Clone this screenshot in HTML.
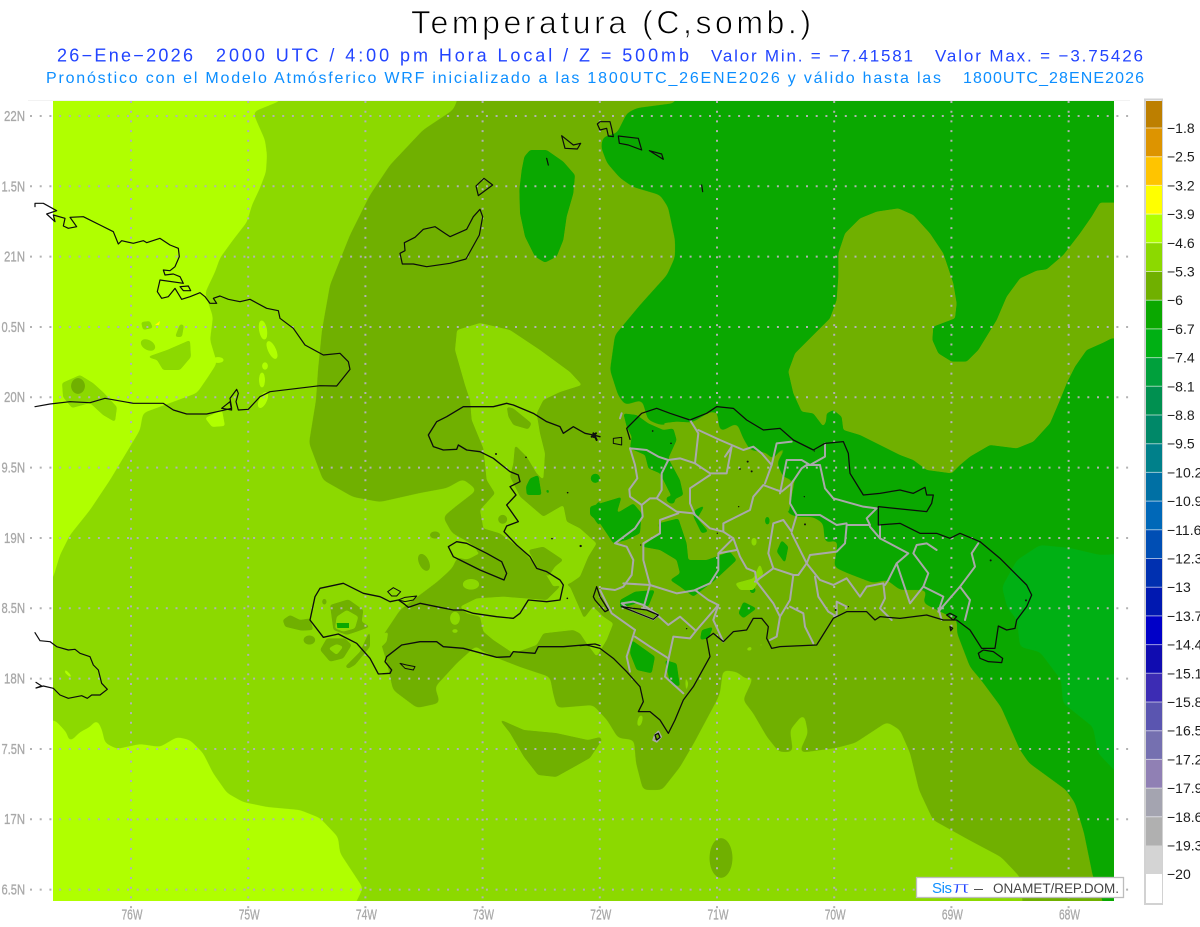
<!DOCTYPE html>
<html lang="es"><head><meta charset="utf-8"><title>Temperatura (C,somb.)</title>
<style>html,body{margin:0;padding:0;background:#fff;width:1200px;height:927px;overflow:hidden}svg{display:block}
text{font-family:"Liberation Sans",sans-serif}
.c{fill:none;stroke:#0c0c0c;stroke-linejoin:round;stroke-linecap:round}
.p{fill:none;stroke:#a9a9a9;stroke-width:6;stroke-linejoin:round;stroke-linecap:round}
.ax{fill:#a8a8a8;font-size:15px;stroke:#a8a8a8;stroke-width:.3}
.lg{fill:#1c1c1c;font-size:14px}
</style></head><body>
<svg width="1200" height="927" viewBox="0 0 1200 927" xmlns="http://www.w3.org/2000/svg">
<defs>
<clipPath id="map"><rect x="53" y="101" width="1061" height="800"/></clipPath>
<filter id="b" filterUnits="userSpaceOnUse" x="0" y="0" width="1200" height="927" color-interpolation-filters="sRGB"><feGaussianBlur stdDeviation="3"/><feComponentTransfer><feFuncA type="linear" slope="12" intercept="-5.5"/></feComponentTransfer></filter>
<filter id="f" filterUnits="userSpaceOnUse" x="0" y="0" width="1200" height="927" color-interpolation-filters="sRGB"><feGaussianBlur stdDeviation="1.3"/><feComponentTransfer><feFuncA type="linear" slope="8" intercept="-3.5"/></feComponentTransfer></filter>
</defs>
<rect width="1200" height="927" fill="#fff"/>
<line x1="28" y1="100.5" x2="1130" y2="100.5" stroke="#f2f2f2"/>
<text x="411" y="33.5" font-size="32" textLength="400" lengthAdjust="spacing" fill="#000" stroke="#fff" stroke-width=".8">Temperatura (C,somb.)</text>
<g font-size="18" fill="#2244ff">
<text x="57" y="61.5" textLength="136" lengthAdjust="spacing">26−Ene−2026</text>
<text x="216" y="61.5" textLength="473" lengthAdjust="spacing">2000 UTC / 4:00 pm Hora Local / Z = 500mb</text>
<text x="711" y="61.5" textLength="202" lengthAdjust="spacing" font-size="17">Valor Min. = −7.41581</text>
<text x="935" y="61.5" textLength="208" lengthAdjust="spacing" font-size="17">Valor Max. = −3.75426</text>
</g>
<g font-size="16" fill="#0c8eff">
<text x="46" y="83" textLength="895" lengthAdjust="spacing">Pronóstico con el Modelo Atmósferico WRF inicializado a las 1800UTC_26ENE2026 y válido hasta las</text>
<text x="963" y="83" textLength="181" lengthAdjust="spacing">1800UTC_28ENE2026</text>
</g>

<!-- map fills -->
<g clip-path="url(#map)">
<rect x="53" y="101" width="1061" height="800" fill="#8cd900"/>
<g filter="url(#b)" fill="#b0ff00">
<path d="M30 80L285 80 280 101 253 112 257 122 265 140 267 155 266 172 260 188 252 205 247 222 233 240 220 258 215 272 205 293 213 317 210 340 217 363 208 377 197 393 170 403 143 413 140 430 128 450 110 480 90 510 70 535 60 555 53 578 30 600Z"/>
<path d="M30 722L55 720 67 733 69 743 80 732 90 727 97 719 102 730 105 743 117 749 140 744 160 747 177 737 190 740 203 753 213 773 227 793 243 802 267 807 300 810 320 818 338 837 340 853 363 888 345 925 30 925Z"/>
</g>
<g filter="url(#f)" fill="#8cd900">
<path d="M141 322L150 321 153 328 143 330Z"/><ellipse cx="148" cy="345" rx="8" ry="5" transform="rotate(30 148 345)"/>
<path d="M147 357L167 350 190 340 191 357 180 370 163 370 157 360Z"/><path d="M175 337L180 324 184 325 182 337Z"/>
<path d="M62 383L80 375 93 383 103 392 117 407 115 422 103 415 90 403 72 408 63 397Z"/>
</g>
<ellipse cx="78" cy="386" rx="7" ry="8" fill="#70b000" filter="url(#f)"/>
<g filter="url(#f)" fill="#b0ff00"><ellipse cx="263" cy="330" rx="4" ry="10" transform="rotate(-10 263 330)"/><ellipse cx="272" cy="350" rx="4" ry="10" transform="rotate(-25 272 350)"/><ellipse cx="262" cy="380" rx="3" ry="8"/><ellipse cx="265" cy="366" rx="3" ry="4"/><ellipse cx="218" cy="360" rx="6" ry="3"/><ellipse cx="263" cy="400" rx="4" ry="9" transform="rotate(25 263 400)"/><path d="M205 418L222 410 225 426 212 427Z"/><path d="M64 668L71 675 72 679 65 673Z"/></g>
<path d="M155 325L160 321 159 325Z" fill="#ffff00"/>

<!-- mid main -->
<g filter="url(#b)" fill="#70b000">
<path d="M460 80L457 101 453 110 423 130 390 165 370 195 350 235 330 285 322 330 318 370 316 400 309 443 323 480 353 497 380 502 420 493 447 488 463 479 477 490 455 507 443 517 452 533 470 543 480 553 467 560 457 557 453 567 447 573 437 582 417 597 400 610 380 640 387 663 393 690 417 708 440 703 435 687 457 663 477 645 480 650 497 658 520 667 550 677 553 693 557 708 593 705 607 720 618 738 634 740 636 763 643 790 662 790 680 767 694 743 717 700 720 693 723 670 737 672 747 680 757 670 743 700 753 713 767 737 779 752 793 752 790 730 804 713 808 733 799 753 836 748 855 743 887 722 900 730 910 753 919 790 933 820 969 840 1001 857 1020 877 1025 925 1140 925 1140 80Z"/>
</g>
<g filter="url(#f)" fill="#70b000">
<path d="M499 719L524 730 556 733 588 740 600 737 602 740 590 758 574 767 556 777 538 775 524 757 510 733Z"/>
<ellipse cx="721" cy="858" rx="11.5" ry="20"/>
</g>
<!-- light patches in Haiti -->
<g filter="url(#f)" fill="#8cd900"><g transform="translate(280,400) scale(.33333)">
<path d="M531 -210L600 -231 690 -210 780 -150 870 -84 906 -45 840 -24 790 0 770 40 780 100 795 160 790 240 800 250 770 220 740 170 705 135 700 190 690 230 720 290 790 350 850 315 860 365 900 385 950 430 925 470 900 530 870 550 820 560 790 510 770 500 735 460 700 430 660 400 610 385 600 330 645 280 620 240 610 145 575 60 570 0 555 -45 525 -150Z"/>
<path d="M670 590L800 600 850 550 870 560 912 655 939 620 970 650 1000 670 980 720 950 770 920 730 900 700 880 690 790 700 770 735 700 760 640 720 610 695 600 650 560 640 540 620 590 595Z"/>
<path d="M505 440L530 425 570 440 600 460 560 478 530 470 515 460Z"/>
<ellipse cx="573" cy="553" rx="25" ry="16"/>
<ellipse cx="525" cy="655" rx="15" ry="20"/>
<ellipse cx="525" cy="693" rx="10" ry="6"/>
<path d="M300 705L325 695 320 725 300 745Z"/>
</g></g>
<g filter="url(#f)" fill="#70b000"><g transform="translate(280,400) scale(.33333)">
<path d="M680 20L700 25 755 70 745 88 700 75 685 50Z"/>
<path d="M745 450L790 440 850 480 825 500 805 530 770 500Z"/>
<ellipse cx="668" cy="358" rx="14" ry="14"/>
<ellipse cx="465" cy="405" rx="16" ry="11"/><ellipse cx="432" cy="487" rx="15" ry="28" transform="rotate(-25 432 487)"/>
<path d="M8 660L30 645 60 660 90 655 100 690 65 692 15 680Z"/><ellipse cx="88" cy="720" rx="18" ry="14"/>
<path d="M150 615L205 598 250 630 245 665 270 680 230 695 200 705 160 690Z"/>
<ellipse cx="133" cy="605" rx="7" ry="10"/>
<path d="M120 750L140 715 195 715 215 735 190 775 150 785Z"/>
<path d="M195 800L240 755 270 690 270 740 225 795 205 806Z"/>
</g></g>
<g filter="url(#f)" fill="#8cd900"><g transform="translate(280,400) scale(.33333)">
<path d="M170 650L200 630 235 650 225 685 190 695 165 685Z"/>
<path d="M145 745L170 732 190 740 170 765Z"/>
</g></g>
<g transform="translate(280,400) scale(.33333)"><path fill="#0aa800" d="M170 669H207V684H172Z"/></g>
<!-- dark -->
<g filter="url(#b)" fill="#0aa800">
<path d="M680 80L675 103 637 108 627 113 617 133 603 137 601 147 607 163 620 178 633 187 660 195 668 207 675 240 675 257 667 275 640 305 615 335 610 370 618 395 625 405 642 400 648 420 660 425 693 422 710 412 717 412 720 432 737 423 743 438 750 450 767 453 772 460 780 450 790 442 777 463 783 477 793 480 788 493 787 513 797 517 813 517 823 523 825 543 838 540 834 567 847 573 873 583 887 580 900 590 927 590 923 603 957 620 957 633 970 667 981 680 1001 707 1020 750 1029 763 1066 790 1075 803 1084 833 1093 877 1098 887 1110 925 1140 925 1140 80Z"/>
</g>
<g filter="url(#f)" fill="#0aa800">
<g transform="translate(280,400) scale(.33333)">
<path d="M750 235L775 225 785 285 740 285 738 260Z"/><ellipse cx="946" cy="235" rx="14" ry="14"/><path d="M930 335L960 300 960 380 948 365Z"/><path d="M795 270L808 268 806 285Z"/>
</g>
<g transform="translate(390,100) scale(.33333)">
<path d="M420 150L470 150 520 185 555 225 550 280 530 350 520 420 500 470 465 488 435 470 405 410 390 340 388 270 395 210 403 170Z"/>
</g>
</g>
<!-- mid blob NE -->
<g filter="url(#f)" fill="#70b000"><g transform="translate(770,190) scale(.33333)">
<path d="M990 38L1050 38 1050 445 1025 445 1000 458 950 480 915 530 890 580 870 630 840 700 790 755 740 775 660 765 600 800 570 825 545 850 470 840 430 810 390 795 330 765 270 735 220 720 215 680 190 660 170 670 168 695 160 710 145 690 130 670 95 665 70 610 55 545 75 490 130 435 180 385 200 330 205 260 205 190 225 130 270 85 320 65 385 55 430 75 480 130 520 190 550 280 560 340 555 385 490 410 487 450 505 490 545 515 590 515 625 480 680 390 710 320 750 265 800 242 830 238 880 195 930 130 965 80Z"/>
</g></g>
<!-- brighter green SE -->
<g filter="url(#b)" fill="#00b014">
<path d="M1040 545L1070 548 1100 555 1140 553 1140 790 1114 770 1098 753 1093 727 1063 703 1061 680 1040 652 1020 647 1017 620 1007 607 1002 587 1017 560Z"/>
</g>
<!-- DR patches -->
<g filter="url(#f)" fill="#0aa800"><g transform="translate(580,400) scale(.33333)">
<path d="M130 40L170 45 205 70 250 90 280 85 290 120 265 175 300 240 310 285 280 300 255 250 240 220 205 205 195 165 150 145 155 110 140 80Z"/>
<ellipse cx="46" cy="235" rx="14" ry="14"/>
<path d="M30 320L60 310 110 295 125 290 110 340 160 310 185 340 180 400 140 420 100 430 60 370 30 345Z"/>
<path d="M185 440L240 400 235 370 295 355 320 430 325 480 380 480 450 455 470 480 400 545 340 590 300 560 270 540 300 520 290 480 240 450Z"/>
<path d="M345 330L375 315 352 355 385 395 365 400 340 350Z"/>
<ellipse cx="272" cy="300" rx="14" ry="10" transform="rotate(30 272 300)"/>
<path d="M120 600L165 575 225 570 205 620 170 610 120 625Z"/>
<path d="M155 720L225 770 215 820 170 810 150 760Z"/>
<path d="M255 780L290 790 300 860 270 850Z"/>
<path d="M475 640L490 605 530 625 490 655Z"/>
<path d="M605 420L625 440 615 490 590 455Z"/>
<path d="M365 690L400 680 385 715 360 720Z"/>
<ellipse cx="518" cy="570" rx="9" ry="10"/>
<ellipse cx="562" cy="362" rx="7" ry="13"/>
</g></g>
<g filter="url(#f)" fill="#70b000"><g transform="translate(580,400) scale(.33333)">
<path d="M245 70L290 65 340 68 390 38 410 38 418 92 330 95 270 85Z"/>
<path d="M635 240L645 235 625 345 612 300Z"/>
</g></g>
<g filter="url(#f)" fill="#8cd900"><g transform="translate(580,400) scale(.33333)">
<path d="M465 550L520 535 540 490 550 520 520 570 480 570Z"/>
<ellipse cx="522" cy="425" rx="8" ry="13"/>
<path d="M315 820L325 850 318 890Z"/>
<ellipse cx="180" cy="962" rx="7" ry="18" transform="rotate(15 180 962)"/>
<path d="M500 745L515 738 515 752 500 752Z"/><path d="M535 738L550 725 545 740Z"/>
</g></g>
</g>

<!-- grid -->
<g fill="none" stroke="#b2b2b2" stroke-width="2" stroke-dasharray="2 7.7">
<path d="M30 116H1130M30 186.3H1130M30 256.6H1130M30 327H1130M30 397.3H1130M30 467.6H1130M30 538H1130M30 608.3H1130M30 678.6H1130M30 749H1130M30 819.3H1130M30 889.6H1130"/>
<path d="M131 101V912M248.2 101V912M365.4 101V912M482.6 101V912M599.8 101V912M717 101V912M834.2 101V912M951.4 101V912M1068.6 101V912"/>
</g>

<!-- provinces -->
<g transform="translate(580,400) scale(.33333)">
<g class="p">
<polyline points="150,145 165,195 172,235 148,268 150,290 185,315 188,350 165,385 105,430 140,440 160,480 155,525 130,560 105,570 65,565"/>
<polyline points="150,145 200,150 235,170 265,180 300,175 345,190 355,100 330,60"/>
<polyline points="355,90 420,120 490,150 520,140 545,160 575,195 590,130 635,125"/>
<polyline points="265,180 245,220 245,270 230,295 210,295 185,315"/>
<polyline points="230,295 290,335 340,340 390,385 430,395 460,415 480,470 500,505 525,515 530,545 580,610 600,650 590,710 570,720"/>
<polyline points="345,190 390,220 440,220 455,140 435,170"/>
<polyline points="390,225 330,265 330,310 345,345"/>
<polyline points="430,395 430,370 510,330 520,290 550,255 590,270 605,275 635,250 665,205 680,195 720,195 735,265 760,295 850,320 890,325 860,355 870,375 800,375 795,430 770,455 690,465 680,490"/>
<polyline points="575,195 555,250"/>
<polyline points="600,280 620,180 665,180 690,195 735,170 735,130"/>
<polyline points="635,250 630,310 650,345 720,345 770,375 800,370"/>
<polyline points="650,345 635,395 610,360 580,370 565,460 580,505 640,525 655,525 680,490 635,400"/>
<polyline points="680,490 720,540 760,555 800,535 840,590 860,560 910,550 915,595 900,625 935,660"/>
<polyline points="870,380 900,415 985,460 950,490 925,540 915,555"/>
<polyline points="950,490 990,610 1030,560 1045,520 1000,460 1010,435 1040,430 1070,450"/>
<polyline points="900,375 900,415"/>
<polyline points="1030,560 1090,590 1075,635 1140,560 1170,600 1155,660"/>
<polyline points="1195,430 1175,460 1185,500 1140,560"/>
<polyline points="1075,625 1085,660"/>
<polyline points="640,525 630,600 600,650"/><polyline points="630,620 670,640 675,680 700,730"/>
<polyline points="705,530 715,590 745,635 770,650 770,605 800,620"/>
<polyline points="580,505 525,545"/>
<polyline points="460,415 415,460 415,510 390,550 345,570 385,600 415,615 350,690 330,715 280,710 265,780 255,830 310,880"/>
<polyline points="415,615 400,660 430,725"/>
<polyline points="345,690 300,650 265,675 220,635 190,625 210,555 190,480 190,430 240,400 240,360 295,340"/>
<polyline points="130,550 210,555 290,580 350,570"/>
<polyline points="165,690 95,640 60,570"/>
<polyline points="165,690 140,770 150,815"/>
<polyline points="165,710 210,740 265,775"/>
<polyline points="415,460 470,450"/>
<polyline points="125,40 120,55"/>
<polygon points="125,610 160,605 190,615 235,645 220,658 150,630"/>
<polygon points="225,1005 235,995 243,1010 230,1025 220,1020"/>
</g>
<!-- DR coast -->
<g class="c" stroke-width="3.8">
<polyline points="150,118 140,85 185,40 230,25 270,40 330,60 380,40 410,20 460,25 500,60 550,90 600,85 640,120 700,150 735,130 790,125 805,160 810,220 850,285 900,280 960,270 1000,280 1035,262 1040,285 1060,285 1055,310 1040,335 895,320 895,375 960,370 1020,400 1070,400 1110,415 1140,400 1200,425 1260,475 1340,555 1355,585 1340,620 1310,660 1305,685 1280,690 1255,678 1245,745 1205,745 1170,690 1130,660 1090,660 1040,645 960,655 900,650 885,660 860,635 800,635 760,655 710,735 600,740 575,745 560,715 565,680 545,655 520,655 500,690 460,695 430,725 400,700 380,715 390,770 340,860 310,900 285,960 265,1000 240,960 210,935 175,935 190,905 180,860 140,815 100,775 60,745 20,735 0,737"/>
<polygon points="1195,760 1210,750 1240,755 1268,775 1265,788 1225,785 1200,775"/>
<polygon points="125,620 160,625 200,630 235,645 220,658 150,630"/>
<polygon points="40,590 50,560 60,590 85,630 75,635 45,600"/>
<polygon points="1100,645 1110,640 1130,650 1120,660"/>
<polygon points="1110,680 1118,685 1112,692"/>
<polygon points="225,1005 235,1000 240,1012 230,1020"/>
<polygon points="100,115 125,112 125,135 100,130" stroke-width="3"/>
<path d="M40 100L50 120M35 110L48 100" stroke-width="6"/>
</g>
<g fill="#111">
<circle cx="503" cy="185" r="3"/><circle cx="480" cy="207" r="2.5"/><circle cx="515" cy="214" r="3"/><circle cx="675" cy="373" r="3"/><circle cx="1232" cy="481" r="3"/><circle cx="1338" cy="601" r="3"/><circle cx="767" cy="630" r="3"/><circle cx="218" cy="93" r="2.5"/><circle cx="273" cy="130" r="2.5"/><circle cx="703" cy="153" r="2"/><circle cx="182" cy="435" r="2"/><circle cx="476" cy="320" r="2"/><circle cx="412" cy="400" r="2"/><circle cx="673" cy="290" r="2"/><circle cx="320" cy="686" r="2"/><circle cx="805" cy="620" r="2"/>
</g>
</g>
<!-- Haiti coast -->
<g transform="translate(280,400) scale(.33333)" class="c" stroke-width="4">
<polyline points="960,110 940,105 915,100 880,80 850,100 840,80 800,65 760,40 700,15 680,10 640,20 550,20 500,50 470,65 445,105 460,140 490,150 530,148 535,135 560,150 600,155 640,175 690,215 715,225 720,245 690,260 708,285 680,315 715,365 680,378 672,395 710,435 750,470 770,505 800,515 840,540 850,555 840,600 800,605 745,600 720,640 700,655 650,650 580,640 550,630 520,630 470,620 420,610 385,622 370,610 355,600 330,605 300,590 250,580 190,550 120,565 105,590 90,660 130,712 175,702 230,730 270,775 295,822 330,820 335,810 315,785 320,770 365,735 420,725 470,725 490,740 550,745 650,772 690,770 700,755 765,760 775,740 850,740 945,732 960,737"/>
<polygon points="505,440 530,425 560,430 620,460 665,485 680,520 672,540 600,510 540,480 520,470"/>
<polygon points="360,790 380,795 405,800 400,810 375,805" stroke-width="3"/>
<polygon points="323,575 340,563 362,575 350,588 335,588" stroke-width="3"/>
<polygon points="355,600 375,592 410,588 400,600 375,605" stroke-width="3"/>
<circle cx="942" cy="108" r="6" fill="#111" stroke="none"/>
<g fill="#111" stroke="none"><circle cx="648" cy="162" r="3"/><circle cx="738" cy="172" r="2.5"/><circle cx="863" cy="278" r="2.5"/><circle cx="816" cy="416" r="2.5"/><circle cx="902" cy="438" r="3.5"/><circle cx="862" cy="595" r="2.5"/></g>
</g>
<!-- Cuba -->
<g transform="translate(0,100) scale(.33333)" class="c" stroke-width="3.6">
<polyline points="105,320 105,310 130,310 170,332 140,342 165,365 160,345 195,355 190,378 205,385 230,380 210,352 250,350 300,375 340,395 355,432 365,422 400,430 430,422 440,428 480,415 510,435 535,445 538,470 525,500 510,512 490,510 495,525 520,522 540,530 550,550 480,540 472,575 485,595 505,590 525,565 545,598 570,590 600,578 615,590 630,610 650,610 640,595 660,588 685,598 720,605 750,598 800,625 835,632 840,655 880,685 915,735 970,765 1020,760 1045,785 1050,808 1010,858 960,857 810,875 780,890 745,928 715,930 708,905 715,880 710,868 690,895 695,925 665,932 620,942 560,942 520,930 490,910 400,910 315,895 270,908 210,905 150,912 105,920"/>
<polygon points="540,560 565,558 572,572 550,572"/>
<polygon points="665,925 690,905 695,930"/>
</g>
<!-- Jamaica -->
<g transform="translate(0,600) scale(.33333)" class="c" stroke-width="3.6">
<polyline points="105,98 120,122 150,125 170,140 205,150 225,148 240,160 270,170 280,195 295,210 305,250 322,268 300,285 275,285 262,295 245,287 205,295 180,285 160,265 130,258 108,264 125,258 108,247"/>
</g>
<!-- Bahamas -->
<g transform="translate(390,100) scale(.33333)" class="c" stroke-width="3.6">
<polygon points="37,492 30,460 45,452 43,428 75,412 100,388 135,380 165,400 180,410 230,388 250,350 270,328 278,350 268,405 228,477 180,490 110,500 70,492"/>
<polygon points="258,258 282,235 308,255 265,287"/>
<polygon points="515,107 550,135 572,130 562,147 525,145"/>
<polygon points="622,72 630,65 660,65 665,85 670,110 655,108 650,85 630,90"/>
<polygon points="685,108 745,115 755,150 715,135 688,130"/>
<polygon points="778,152 815,162 820,178"/>
<path d="M470 175L475 195M935 255L938 275"/>
</g>

<!-- axis labels -->
<g class="ax" lengthAdjust="spacingAndGlyphs">
<text x="4" y="121" textLength="21" lengthAdjust="spacingAndGlyphs">22N</text><text x="1.5" y="191.5" textLength="23.5" lengthAdjust="spacingAndGlyphs">1.5N</text><text x="4" y="261.5" textLength="21" lengthAdjust="spacingAndGlyphs">21N</text><text x="1.5" y="332" textLength="23.5" lengthAdjust="spacingAndGlyphs">0.5N</text><text x="4" y="402" textLength="21" lengthAdjust="spacingAndGlyphs">20N</text><text x="1.5" y="472.5" textLength="23.5" lengthAdjust="spacingAndGlyphs">9.5N</text><text x="4" y="543" textLength="21" lengthAdjust="spacingAndGlyphs">19N</text><text x="1.5" y="613" textLength="23.5" lengthAdjust="spacingAndGlyphs">8.5N</text><text x="4" y="683.5" textLength="21" lengthAdjust="spacingAndGlyphs">18N</text><text x="1.5" y="754" textLength="23.5" lengthAdjust="spacingAndGlyphs">7.5N</text><text x="4" y="824" textLength="21" lengthAdjust="spacingAndGlyphs">17N</text><text x="1.5" y="894.5" textLength="23.5" lengthAdjust="spacingAndGlyphs">6.5N</text>
<text x="121.5" y="919.5" textLength="21" lengthAdjust="spacingAndGlyphs">76W</text><text x="238.7" y="919.5" textLength="21" lengthAdjust="spacingAndGlyphs">75W</text><text x="355.9" y="919.5" textLength="21" lengthAdjust="spacingAndGlyphs">74W</text><text x="473" y="919.5" textLength="21" lengthAdjust="spacingAndGlyphs">73W</text><text x="590.3" y="919.5" textLength="21" lengthAdjust="spacingAndGlyphs">72W</text><text x="707.5" y="919.5" textLength="21" lengthAdjust="spacingAndGlyphs">71W</text><text x="824.7" y="919.5" textLength="21" lengthAdjust="spacingAndGlyphs">70W</text><text x="941.9" y="919.5" textLength="21" lengthAdjust="spacingAndGlyphs">69W</text><text x="1059" y="919.5" textLength="21" lengthAdjust="spacingAndGlyphs">68W</text>
</g>

<!-- logo -->
<rect x="916.5" y="877.5" width="207" height="20" fill="#fff" stroke="#bdbdbd" stroke-width="1.3"/>
<text x="932" y="893" font-size="15" fill="#1090ff" textLength="20" lengthAdjust="spacing">Sis</text>
<text x="952" y="893" font-size="17" fill="#2244ff" textLength="18" lengthAdjust="spacingAndGlyphs" stroke="#fff" stroke-width=".5">π</text>
<text x="974" y="893" font-size="13.5" fill="#444" textLength="9" lengthAdjust="spacingAndGlyphs">–</text>
<text x="993" y="893" font-size="13.5" fill="#444" textLength="126" lengthAdjust="spacing">ONAMET/REP.DOM.</text>

<!-- legend -->
<rect x="1145" y="99.5" width="17" height="804.5" fill="#fff" stroke="#d2d2d2" stroke-width="2"/>
<g shape-rendering="crispEdges">
<rect x="1146" y="101" width="16" height="27" fill="#bd7f00"/>
<rect x="1146" y="128" width="16" height="28.7" fill="#dd9400"/>
<rect x="1146" y="156.7" width="16" height="28.7" fill="#ffc400"/>
<rect x="1146" y="185.4" width="16" height="28.7" fill="#ffff00"/>
<rect x="1146" y="214.1" width="16" height="28.7" fill="#b0ff00"/>
<rect x="1146" y="242.8" width="16" height="28.7" fill="#8cd900"/>
<rect x="1146" y="271.5" width="16" height="28.7" fill="#70b000"/>
<rect x="1146" y="300.2" width="16" height="28.7" fill="#0aa800"/>
<rect x="1146" y="328.9" width="16" height="28.7" fill="#00b014"/>
<rect x="1146" y="357.6" width="16" height="28.7" fill="#00a03c"/>
<rect x="1146" y="386.3" width="16" height="28.7" fill="#009050"/>
<rect x="1146" y="415" width="16" height="28.7" fill="#008868"/>
<rect x="1146" y="443.7" width="16" height="28.7" fill="#00808a"/>
<rect x="1146" y="472.4" width="16" height="28.7" fill="#0070a4"/>
<rect x="1146" y="501.1" width="16" height="28.7" fill="#0068b8"/>
<rect x="1146" y="529.8" width="16" height="28.7" fill="#004eb4"/>
<rect x="1146" y="558.5" width="16" height="28.7" fill="#0030b0"/>
<rect x="1146" y="587.2" width="16" height="28.7" fill="#0018b0"/>
<rect x="1146" y="615.9" width="16" height="28.7" fill="#0000c8"/>
<rect x="1146" y="644.6" width="16" height="28.7" fill="#100cb0"/>
<rect x="1146" y="673.3" width="16" height="28.7" fill="#3c2cb4"/>
<rect x="1146" y="702" width="16" height="28.7" fill="#5a55b0"/>
<rect x="1146" y="730.7" width="16" height="28.7" fill="#7570b0"/>
<rect x="1146" y="759.4" width="16" height="28.7" fill="#9080b4"/>
<rect x="1146" y="788.1" width="16" height="28.7" fill="#a4a4b0"/>
<rect x="1146" y="816.8" width="16" height="28.7" fill="#b0b0b0"/>
<rect x="1146" y="845.5" width="16" height="28.7" fill="#d4d4d4"/>
<rect x="1146" y="874.2" width="16" height="29" fill="#fff"/>
</g>
<path stroke="#fff" stroke-opacity=".6" stroke-width="1" fill="none" d="M1146 128H1162M1146 156.7H1162M1146 185.4H1162M1146 214.1H1162M1146 242.8H1162M1146 271.5H1162M1146 300.2H1162M1146 328.9H1162M1146 357.6H1162M1146 386.3H1162M1146 415H1162M1146 443.7H1162M1146 472.4H1162M1146 501.1H1162M1146 529.8H1162M1146 558.5H1162M1146 587.2H1162M1146 615.9H1162M1146 644.6H1162M1146 673.3H1162M1146 702H1162M1146 730.7H1162M1146 759.4H1162M1146 788.1H1162M1146 816.8H1162"/>
<g class="lg">
<text x="1167" y="133">−1.8</text><text x="1167" y="161.7">−2.5</text><text x="1167" y="190.4">−3.2</text><text x="1167" y="219.1">−3.9</text><text x="1167" y="247.8">−4.6</text><text x="1167" y="276.5">−5.3</text><text x="1167" y="305.2">−6</text><text x="1167" y="333.9">−6.7</text><text x="1167" y="362.6">−7.4</text><text x="1167" y="391.3">−8.1</text><text x="1167" y="420">−8.8</text><text x="1167" y="448.7">−9.5</text><text x="1167" y="477.4">−10.2</text><text x="1167" y="506.1">−10.9</text><text x="1167" y="534.8">−11.6</text><text x="1167" y="563.5">−12.3</text><text x="1167" y="592.2">−13</text><text x="1167" y="620.9">−13.7</text><text x="1167" y="649.6">−14.4</text><text x="1167" y="678.3">−15.1</text><text x="1167" y="707">−15.8</text><text x="1167" y="735.7">−16.5</text><text x="1167" y="764.4">−17.2</text><text x="1167" y="793.1">−17.9</text><text x="1167" y="821.8">−18.6</text><text x="1167" y="850.5">−19.3</text><text x="1167" y="879.2">−20</text>
</g>
</svg>
</body></html>
